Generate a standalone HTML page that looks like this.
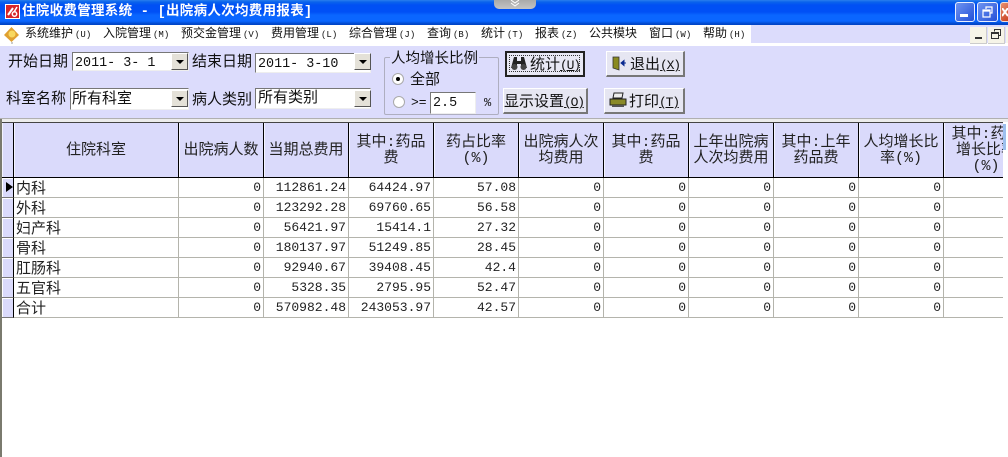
<!DOCTYPE html>
<html lang="zh"><head><meta charset="utf-8"><title>住院收费管理系统</title>
<style>
html,body{margin:0;padding:0;background:#fff}
#p{position:relative;width:1008px;height:457px;overflow:hidden;background:#fff;font-family:"Liberation Mono","Noto Sans CJK SC",monospace;color:#111;font-size:15px}
#p div,#p span.a,#p svg.a{position:absolute}
.t{white-space:nowrap;line-height:18px}
.m{font-size:12px;line-height:16px;white-space:nowrap;top:26px;color:#111}
.m i{font-style:normal;font-size:9px;margin-left:2px}
.in{background:#fff;border-top:1px solid #777;border-left:1px solid #777;border-right:1px solid #eee;border-bottom:1px solid #eee;box-sizing:border-box}
.dd{background:#e4e1d8;border-top:1px solid #fff;border-left:1px solid #fff;border-right:1px solid #555;border-bottom:1px solid #555;box-sizing:border-box;width:17px;height:17px}
.dd::after{content:"";position:absolute;left:4px;top:6px;border-left:4px solid transparent;border-right:4px solid transparent;border-top:4px solid #000}
.b{background:#e6e6f2;border-top:1px solid #fff;border-left:1px solid #fff;border-right:2px solid #777;border-bottom:2px solid #777;box-sizing:border-box}
.v{font-size:13.4px;line-height:18px;white-space:nowrap}
.c{font-size:15px;line-height:18px;white-space:nowrap}
.b u,.c u{font-size:13px;letter-spacing:-1.2px}
table{border-collapse:separate;border-spacing:0;table-layout:fixed;position:absolute;left:0;top:0;width:1026px}
th{background:#dadafb;font-weight:normal;font-size:15px;line-height:16px;height:52px;padding:3px 0 0;border-right:1px solid #000;border-bottom:1px solid #000;box-sizing:content-box;box-shadow:inset 1px 1px 0 #f3f3ff;color:#222;overflow:hidden}
td{height:18px;padding:1px 2px 0 0;border-right:1px solid #b4b4ac;border-bottom:1px solid #b4b4ac;font-size:13px;line-height:18px;text-align:right;overflow:hidden;white-space:nowrap;color:#222}
td.n{text-align:left;font-size:15px;padding:0 0 0 2px;height:19px;line-height:19px;border-right-color:#b4b4ac}
td.n span{position:relative;top:2px}
td.i{background:#dadafb;border-right:1px solid #000;border-bottom:1px solid #777;padding:0;height:19px;box-shadow:inset 1px 1px 0 #fff;position:relative}
</style></head><body><div id="p">

<div style="left:0;top:0;width:1008px;height:25px;background:linear-gradient(#2a7fee 0,#0a63ec 2px,#0050f4 5px,#0050f6 12px,#0a66ff 15px,#0a66ff 21px,#0045c8 24px)"></div>
<div style="left:494px;top:0;width:42px;height:9px;background:linear-gradient(#aaa,#c4c4c4);border-radius:0 0 5px 5px"></div>
<svg class="a" style="left:509px;top:0" width="12" height="8"><path d="M2 0l4 3 4-3M2 3l4 3 4-3" fill="none" stroke="#fff" stroke-width="1"/></svg>

<div style="left:5px;top:4px;width:15px;height:15px;background:#d8262a;border:1px solid #fff;box-sizing:border-box"></div>
<svg class="a" style="left:5px;top:4px" width="15" height="15"><path d="M3 11L8 4" fill="none" stroke="#fff" stroke-width="2"/><circle cx="9.500" cy="10" r="2.200" fill="none" stroke="#fff" stroke-width="1.500"/><path d="M12 3l-3 5" fill="none" stroke="#fff" stroke-width="1.500"/></svg>
<div class="t" style="left:22px;top:4px;color:#fff;font-weight:bold;font-size:13.5px;letter-spacing:.3px">住院收费管理系统 - [出院病人次均费用报表]</div>

<div style="left:955px;top:2px;width:20px;height:20px;background:linear-gradient(135deg,#6f94f0,#2350d8);border:1px solid #e8efff;border-radius:3px;box-sizing:border-box"></div>
<div style="left:960px;top:14px;width:8px;height:3px;background:#fff"></div>
<div style="left:977px;top:2px;width:21px;height:20px;background:linear-gradient(135deg,#6f94f0,#2350d8);border:1px solid #e8efff;border-radius:3px;box-sizing:border-box"></div>
<svg class="a" style="left:981px;top:6px" width="13" height="13"><path d="M5 3V1h6v6H9M2 4h7v7H2zM2 5h7" fill="none" stroke="#fff" stroke-width="1.2"/></svg>
<div style="left:1000px;top:2px;width:10px;height:20px;background:linear-gradient(135deg,#e89070,#c84020);border:1px solid #f0e0d8;border-radius:3px;box-sizing:border-box"></div>
<svg class="a" style="left:1002px;top:8px" width="6" height="9"><path d="M0 0l6 8M6 0L0 8" stroke="#fff" stroke-width="2"/></svg>

<div style="left:0;top:25px;width:751px;height:21px;background:#fff"></div>
<div style="left:751px;top:25px;width:257px;height:18px;background:#dcdcfc"></div>
<div style="left:751px;top:43px;width:257px;height:3px;background:#fff"></div>
<svg class="a" style="left:3px;top:26px" width="17" height="18"><path d="M8.500 1L16 9l-7.500 7L1 9z" fill="#e0a030"/><circle cx="9" cy="8" r="3.500" fill="#f8d860"/><path d="M8 16h2v2H8z" fill="#ccc"/></svg>
<div class="m" style="left:25px">系统维护<i>(U)</i></div>
<div class="m" style="left:103px">入院管理<i>(M)</i></div>
<div class="m" style="left:181px">预交金管理<i>(V)</i></div>
<div class="m" style="left:271px">费用管理<i>(L)</i></div>
<div class="m" style="left:349px">综合管理<i>(J)</i></div>
<div class="m" style="left:427px">查询<i>(B)</i></div>
<div class="m" style="left:481px">统计<i>(T)</i></div>
<div class="m" style="left:535px">报表<i>(Z)</i></div>
<div class="m" style="left:589px">公共模块</div>
<div class="m" style="left:649px">窗口<i>(W)</i></div>
<div class="m" style="left:703px">帮助<i>(H)</i></div>

<div style="left:970px;top:27px;width:16px;height:16px;background:#f6f4e8;border-right:1px solid #ccc;border-bottom:1px solid #ccc"></div>
<div style="left:975px;top:37px;width:7px;height:2px;background:#333"></div>
<div style="left:988px;top:27px;width:16px;height:16px;background:#f6f4e8;border-right:1px solid #ccc;border-bottom:1px solid #ccc"></div>
<svg class="a" style="left:991px;top:29px" width="11" height="11"><path d="M3.500 2.500V.5h6v6h-2M.5 3.500h7v6h-7zM.5 4.500h7" fill="none" stroke="#333"/></svg>
<div style="left:1006px;top:27px;width:2px;height:16px;background:#f6f4e8"></div>

<div style="left:0;top:46px;width:1008px;height:73px;background:#dcdcfc"></div>
<div style="left:0;top:118px;width:1008px;height:1px;background:#b0b0b0"></div>
<div style="left:0;top:119px;width:1008px;height:3px;background:#ececec"></div>

<div class="t" style="left:8px;top:54px">开始日期</div>
<div class="in" style="left:72px;top:52px;width:117px;height:19px"></div>
<div class="v" style="left:75px;top:55px">2011- 3- 1</div>
<div class="dd" style="left:171px;top:53px"></div>
<div class="t" style="left:192px;top:54px">结束日期</div>
<div class="in" style="left:255px;top:53px;width:116px;height:20px"></div>
<div class="v" style="left:258px;top:56px">2011- 3-10</div>
<div class="dd" style="left:354px;top:53px"></div>

<div class="t" style="left:6px;top:91px">科室名称</div>
<div class="in" style="left:70px;top:88px;width:119px;height:22px"></div>
<div class="c" style="left:72px;top:91px">所有科室</div>
<div class="dd" style="left:171px;top:90px"></div>
<div class="t" style="left:192px;top:92px">病人类别</div>
<div class="in" style="left:255px;top:88px;width:116px;height:21px"></div>
<div class="c" style="left:258px;top:90px">所有类别</div>
<div class="dd" style="left:354px;top:90px"></div>

<div style="left:384px;top:57px;width:115px;height:58px;border:1px solid #aeaec0;border-radius:2px;box-sizing:border-box"></div>
<div class="t" style="left:390px;top:51px;background:#dcdcfc;padding:0 1px;font-size:14.5px">人均增长比例</div>
<div style="left:392px;top:73px;width:12px;height:12px;border-radius:50%;background:#fff;border:1px solid #aaa;box-sizing:border-box"></div>
<div style="left:396px;top:77px;width:4px;height:4px;border-radius:50%;background:#000"></div>
<div class="t" style="left:410px;top:72px">全部</div>
<div style="left:393px;top:96px;width:12px;height:12px;border-radius:50%;background:#fff;border:1px solid #aaa;box-sizing:border-box"></div>
<div class="t" style="left:411px;top:94px;font-size:13px">&gt;=</div>
<div class="in" style="left:430px;top:92px;width:46px;height:22px"></div>
<div class="v" style="left:433px;top:95px">2.5</div>
<div class="t" style="left:484px;top:94px;font-size:12px">%</div>

<div class="b" style="left:505px;top:51px;width:80px;height:26px;border:2px solid #222;background:#e8e8f4"></div>
<div style="left:509px;top:55px;width:71px;height:17px;border:1px dotted #333;box-sizing:border-box"></div>
<svg class="a" style="left:510px;top:56px" width="18" height="15"><path d="M4 1h3v4h4V1h3l3 11h-6V8H7v4H1z" fill="#222"/><circle cx="4.500" cy="11" r="3" fill="#444"/><circle cx="13.500" cy="11" r="3" fill="#444"/></svg>
<div class="c" style="left:530px;top:57px">统计<u>(U)</u></div>

<div class="b" style="left:606px;top:51px;width:79px;height:26px"></div>
<svg class="a" style="left:612px;top:56px" width="16" height="15"><path d="M1 1h6v13l-6-2z" fill="#8a8a20" stroke="#333" stroke-width=".8"/><path d="M9 7h5M9 7l3-2.500v5z" fill="#0a2a90" stroke="#0a2a90"/></svg>
<div class="c" style="left:630px;top:57px">退出<u>(X)</u></div>

<div class="b" style="left:503px;top:88px;width:85px;height:26px"></div>
<div class="c" style="left:504px;top:94px">显示设置<u>(O)</u></div>

<div class="b" style="left:604px;top:88px;width:81px;height:26px"></div>
<svg class="a" style="left:609px;top:92px" width="18" height="16"><path d="M5 1h9l-1 5H4z" fill="#eee" stroke="#222"/><path d="M1 7h16v6H1z" fill="#8a8a28" stroke="#222"/><path d="M3 13h12v2H3z" fill="#555"/></svg>
<div class="c" style="left:629px;top:94px">打印<u>(T)</u></div>

<div style="left:0;top:119px;width:2px;height:338px;background:#7a7a6e"></div>
<div style="left:2px;top:122px;width:1001px;height:200px;overflow:hidden">
<table>
<colgroup><col style="width:12px"><col style="width:165px"><col style="width:85px"><col style="width:85px"><col style="width:85px"><col style="width:85px"><col style="width:85px"><col style="width:85px"><col style="width:85px"><col style="width:85px"><col style="width:85px"><col style="width:85px"></colgroup>
<tr><th></th><th>住院科室</th><th>出院病人数</th><th>当期总费用</th><th>其中:药品<br>费</th><th>药占比率<br>(%)</th><th>出院病人次<br>均费用</th><th>其中:药品<br>费</th><th>上年出院病<br>人次均费用</th><th>其中:上年<br>药品费</th><th>人均增长比<br>率(%)</th><th>其中:药品<br>增长比率<br>(%)</th></tr>
<tr><td class="i"><div style="left:4px;top:4px;border-left:7px solid #000;border-top:5.500px solid transparent;border-bottom:5.500px solid transparent"></div></td><td class="n"><span>内科</span></td><td>0</td><td>112861.24</td><td>64424.97</td><td>57.08</td><td>0</td><td>0</td><td>0</td><td>0</td><td>0</td><td></td></tr>
<tr><td class="i"></td><td class="n"><span>外科</span></td><td>0</td><td>123292.28</td><td>69760.65</td><td>56.58</td><td>0</td><td>0</td><td>0</td><td>0</td><td>0</td><td></td></tr>
<tr><td class="i"></td><td class="n"><span>妇产科</span></td><td>0</td><td>56421.97</td><td>15414.1</td><td>27.32</td><td>0</td><td>0</td><td>0</td><td>0</td><td>0</td><td></td></tr>
<tr><td class="i"></td><td class="n"><span>骨科</span></td><td>0</td><td>180137.97</td><td>51249.85</td><td>28.45</td><td>0</td><td>0</td><td>0</td><td>0</td><td>0</td><td></td></tr>
<tr><td class="i"></td><td class="n"><span>肛肠科</span></td><td>0</td><td>92940.67</td><td>39408.45</td><td>42.4</td><td>0</td><td>0</td><td>0</td><td>0</td><td>0</td><td></td></tr>
<tr><td class="i"></td><td class="n"><span>五官科</span></td><td>0</td><td>5328.35</td><td>2795.95</td><td>52.47</td><td>0</td><td>0</td><td>0</td><td>0</td><td>0</td><td></td></tr>
<tr><td class="i"></td><td class="n"><span>合计</span></td><td>0</td><td>570982.48</td><td>243053.97</td><td>42.57</td><td>0</td><td>0</td><td>0</td><td>0</td><td>0</td><td></td></tr>
</table>
</div>
<div style="left:2px;top:122px;width:1001px;height:1px;background:#444"></div>
<div style="left:1003px;top:124px;width:3px;height:26px;background:#9cc0ee"></div>
</div></body></html>
